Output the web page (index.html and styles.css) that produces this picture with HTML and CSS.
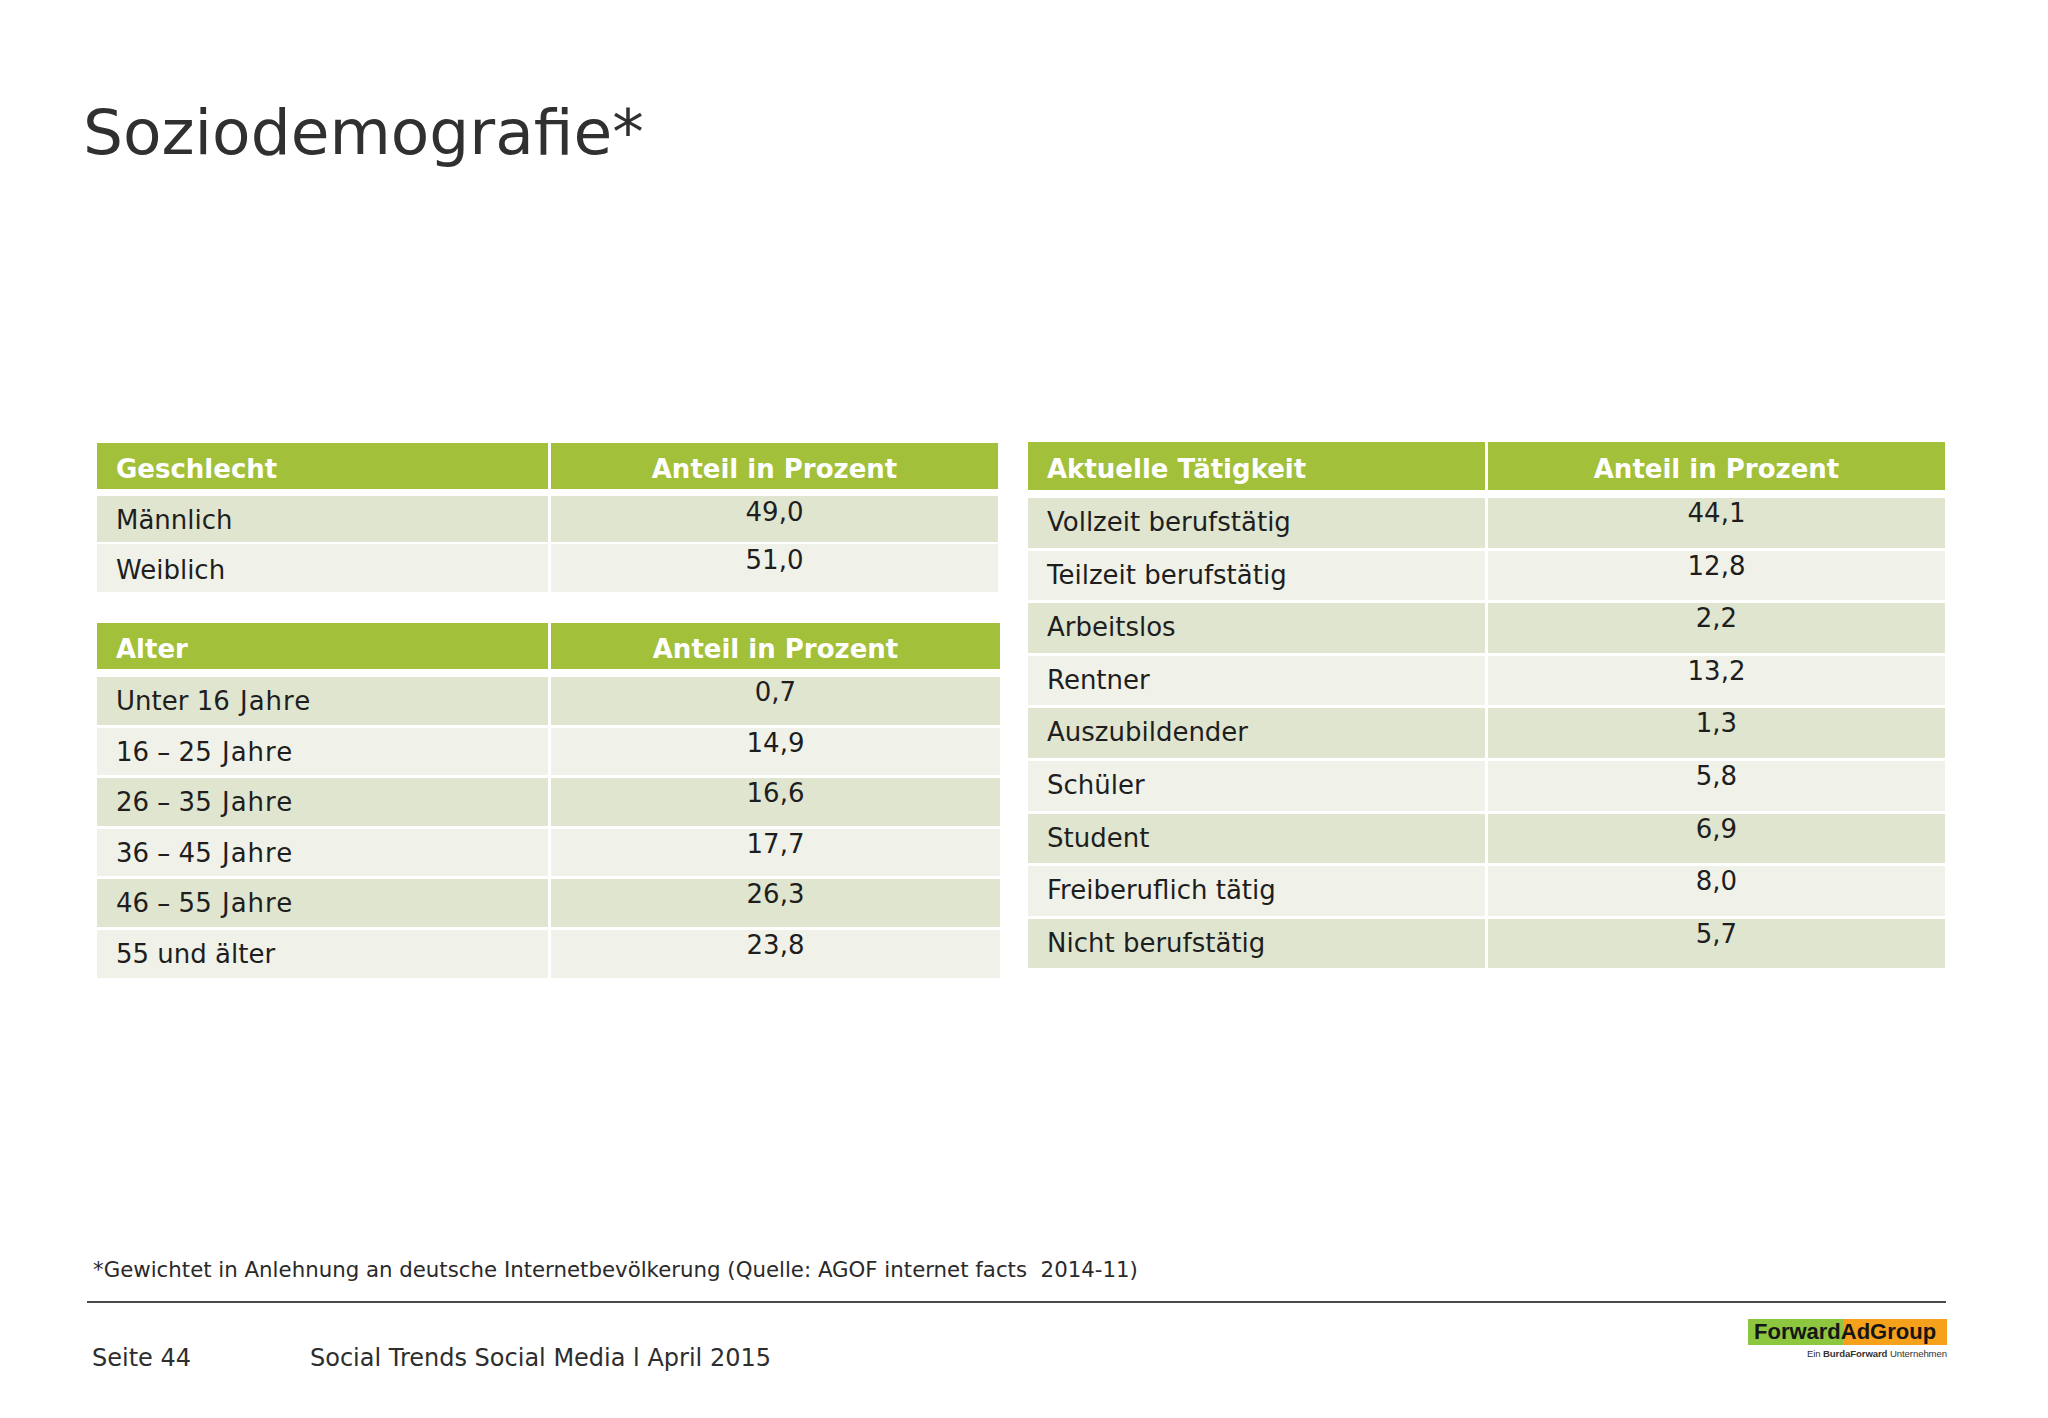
FILE: index.html
```html
<!DOCTYPE html>
<html lang="de">
<head>
<meta charset="utf-8">
<title>Soziodemografie</title>
<link rel="stylesheet" href="styles.css">
</head>
<body>
<div class="slide">
  <h1 class="title">Soziodemografie*</h1>

  <div class="tables">
    <div class="left-col">
      <div class="tbl tbl-gender">
        <div class="row head"><div class="c1">Geschlecht</div><div class="c2">Anteil in Prozent</div></div>
        <div class="body">
          <div class="row dark"><div class="c1">Männlich</div><div class="c2">49,0</div></div>
          <div class="row light tall"><div class="c1">Weiblich</div><div class="c2">51,0</div></div>
        </div>
      </div>

      <div class="tbl tbl-age">
        <div class="row head"><div class="c1">Alter</div><div class="c2">Anteil in Prozent</div></div>
        <div class="body">
          <div class="row dark"><div class="c1">Unter 16 <span class="yr">Jahre</span></div><div class="c2">0,7</div></div>
          <div class="row light"><div class="c1">16 – 25 <span class="yr">Jahre</span></div><div class="c2">14,9</div></div>
          <div class="row dark"><div class="c1">26 – 35 <span class="yr">Jahre</span></div><div class="c2">16,6</div></div>
          <div class="row light"><div class="c1">36 – 45 <span class="yr">Jahre</span></div><div class="c2">17,7</div></div>
          <div class="row dark"><div class="c1">46 – 55 <span class="yr">Jahre</span></div><div class="c2">26,3</div></div>
          <div class="row light"><div class="c1">55 und älter</div><div class="c2">23,8</div></div>
        </div>
      </div>
    </div>

    <div class="tbl tbl-job">
      <div class="row head"><div class="c1">Aktuelle Tätigkeit</div><div class="c2">Anteil in Prozent</div></div>
      <div class="body">
        <div class="row dark"><div class="c1">Vollzeit berufstätig</div><div class="c2">44,1</div></div>
        <div class="row light"><div class="c1">Teilzeit berufstätig</div><div class="c2">12,8</div></div>
        <div class="row dark"><div class="c1">Arbeitslos</div><div class="c2">2,2</div></div>
        <div class="row light"><div class="c1">Rentner</div><div class="c2">13,2</div></div>
        <div class="row dark"><div class="c1">Auszubildender</div><div class="c2">1,3</div></div>
        <div class="row light"><div class="c1">Schüler</div><div class="c2">5,8</div></div>
        <div class="row dark"><div class="c1">Student</div><div class="c2">6,9</div></div>
        <div class="row light"><div class="c1">Freiberuflich tätig</div><div class="c2">8,0</div></div>
        <div class="row dark"><div class="c1">Nicht berufstätig</div><div class="c2">5,7</div></div>
      </div>
    </div>
  </div>

  <p class="footnote">*Gewichtet in Anlehnung an deutsche Internetbevölkerung (Quelle: AGOF internet facts&nbsp; 2014-11)</p>
  <div class="rule"></div>

  <div class="footer">
    <div class="footer-text">
      <span class="page">Seite 44</span>
      <span class="doc">Social Trends Social Media l April 2015</span>
    </div>
    <div class="logo">
      <div class="logo-box">ForwardAdGroup</div>
      <div class="logo-tag">Ein <b>BurdaForward</b> Unternehmen</div>
    </div>
  </div>
</div>
</body>
</html>
```

FILE: styles.css
```css
html, body {
  margin: 0;
  padding: 0;
  background: #ffffff;
}

.slide {
  width: 2048px;
  height: 1418px;
  display: flex;
  flex-direction: column;
  font-family: "DejaVu Sans", Verdana, sans-serif;
  color: #1e1e1e;
}

.title {
  margin: 94px 0 0 83px;
  font-size: 63px;
  line-height: 77px;
  font-weight: normal;
  color: #303030;
}

.tables {
  margin-top: 271px;
  display: flex;
  align-items: flex-start;
  padding-left: 97px;
  gap: 28px;
}

.left-col {
  display: flex;
  flex-direction: column;
  gap: 31px;
  padding-top: 1px;
}

.tbl {
  display: flex;
  flex-direction: column;
}

.row {
  display: grid;
  column-gap: 3px;
  font-size: 26px;
  line-height: 30px;
}

.row > div {
  box-sizing: border-box;
}

.c1 {
  padding-left: 19px;
  padding-top: 8px;
}

.c2 {
  text-align: center;
  padding-top: 0;
}

.yr {
  letter-spacing: 1px;
  margin-left: 2px;
}

.head > div {
  background: #a3c03b;
  color: #ffffff;
  font-weight: bold;
  padding-top: 11px;
}

.dark > div {
  background: #e0e5d0;
}

.light > div {
  background: #f0f2e9;
}

.body {
  display: flex;
  flex-direction: column;
}

/* Geschlecht */
.tbl-gender { width: 901px; }
.tbl-gender .row { grid-template-columns: 451px 447px; }
.tbl-gender .head { height: 46px; margin-bottom: 7px; }
.tbl-gender .body { gap: 2px; }
.tbl-gender .body .row { height: 46px; }
.tbl-gender .body .row.tall { height: 48px; }
.tbl-gender .body .c2 { padding-top: 1px; }
.tbl-gender .body .c1 { padding-top: 9px; }
.tbl-gender .body .row.tall .c1 { padding-top: 11px; }

/* Alter */
.tbl-age { width: 903px; }
.tbl-age .row { grid-template-columns: 451px 449px; }
.tbl-age .head { height: 46px; margin-bottom: 8px; }
.tbl-age .body { gap: 3px; }
.tbl-age .body .row { height: 47.6px; }
.tbl-age .body .c1 { padding-top: 9px; }

/* Tätigkeit */
.tbl-job { width: 917px; }
.tbl-job .row { grid-template-columns: 457px 457px; }
.tbl-job .head { height: 48px; margin-bottom: 8px; }
.tbl-job .head > div { padding-top: 12px; }
.tbl-job .body { gap: 3px; }
.tbl-job .body .row { height: 49.6px; }
.tbl-job .body .c1 { padding-top: 9px; }

.footnote {
  margin: 279px 0 0 93px;
  font-size: 21.3px;
  line-height: 25px;
  color: #2a2a2a;
}

.rule {
  margin: 19px 0 0 87px;
  width: 1859px;
  height: 2px;
  background: #4a4a4a;
}

.footer {
  margin: 16px 0 0 92px;
  width: 1855px;
  display: flex;
  justify-content: space-between;
  align-items: flex-start;
}

.footer-text {
  padding-top: 25px;
  font-size: 24px;
  line-height: 28px;
  color: #2e2e2e;
  display: flex;
}

.page {
  width: 218px;
}

.logo {
  display: flex;
  flex-direction: column;
  align-items: flex-end;
}

.logo-box {
  width: 199px;
  height: 26px;
  box-sizing: border-box;
  padding-left: 6px;
  background: linear-gradient(to right, #8dc63f 0, #8dc63f 95px, #f6a11c 95px, #f6a11c 100%);
  font-family: "Liberation Sans", Arial, sans-serif;
  font-weight: bold;
  font-size: 22px;
  line-height: 26px;
  letter-spacing: 0;
  color: #161616;
  white-space: nowrap;
}

.logo-tag {
  margin-top: 3px;
  font-family: "Liberation Sans", Arial, sans-serif;
  font-size: 9.6px;
  line-height: 11px;
  letter-spacing: -0.1px;
  color: #333333;
  white-space: nowrap;
}
```
